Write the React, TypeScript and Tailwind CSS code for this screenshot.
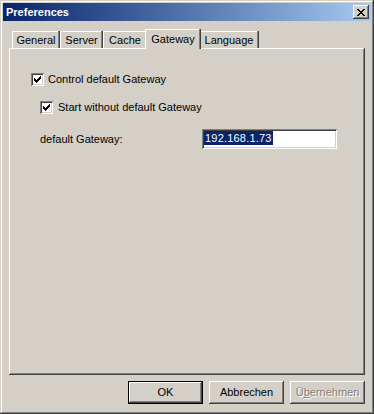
import type { ReactNode } from "react";

// Windows 2000 style "Preferences" dialog, Gateway tab selected.

const FONT = "font-['Liberation_Sans',Arial,sans-serif]";

function CheckMark() {
  // classic 7x7 pixel check: each column is a 3px bar
  const cols = [2, 3, 4, 3, 2, 1, 0];
  return (
    <svg width="7" height="7" viewBox="0 0 7 7" shapeRendering="crispEdges">
      {cols.map((y, x) => (
        <rect key={x} x={x} y={y} width="1" height="3" fill="#000" />
      ))}
    </svg>
  );
}

function Checkbox({ checked }: { checked: boolean }) {
  return (
    <div className="flex h-[13px] w-[13px] shrink-0 items-center justify-center bg-white shadow-[inset_1px_1px_0_#808080,inset_-1px_-1px_0_#ffffff,inset_2px_2px_0_#404040,inset_-2px_-2px_0_#d4d0c8]">
      {checked && <CheckMark />}
    </div>
  );
}

function CloseGlyph() {
  const rows = [
    [0, 1, 6, 7],
    [1, 2, 5, 6],
    [2, 3, 4, 5],
    [3, 4],
    [2, 3, 4, 5],
    [1, 2, 5, 6],
    [0, 1, 6, 7],
  ];
  return (
    <svg width="8" height="7" viewBox="0 0 8 7" shapeRendering="crispEdges">
      {rows.flatMap((xs, y) => xs.map((x) => <rect key={`${x}-${y}`} x={x} y={y} width="1" height="1" fill="#000" />))}
    </svg>
  );
}

function Tab({ label, width, selected }: { label: string; width: number; selected?: boolean }) {
  if (selected) {
    return (
      <div
        className="relative z-10 -mx-[2px] mb-[-1px] h-[20px] bg-[#d4d0c8] pt-[4px] text-center shadow-[inset_-1px_0_0_#404040,inset_-2px_0_0_#808080,inset_1px_1px_0_#ffffff]"
        style={{ width: width + 4 }}
      >
        {label}
      </div>
    );
  }
  return (
    <div
      className="h-[17px] bg-[#d4d0c8] pt-[3px] text-center shadow-[inset_-1px_0_0_#404040,inset_-2px_0_0_#808080,inset_1px_1px_0_#ffffff]"
      style={{ width }}
    >
      {label}
    </div>
  );
}

function Button({ children, isDefault, disabled }: { children: ReactNode; isDefault?: boolean; disabled?: boolean }) {
  const bevel = isDefault
    ? "shadow-[inset_0_0_0_1px_#000000,inset_-2px_-2px_0_#404040,inset_2px_2px_0_#ffffff,inset_-3px_-3px_0_#808080]"
    : "shadow-[inset_-1px_-1px_0_#404040,inset_1px_1px_0_#ffffff,inset_-2px_-2px_0_#808080]";
  return (
    <div
      className={`flex h-[23px] w-[75px] items-center justify-center bg-[#d4d0c8] ${bevel} ${
        disabled ? "text-[#808080] [text-shadow:1px_1px_0_#ffffff]" : "text-black"
      }`}
    >
      {children}
    </div>
  );
}

export default function App() {
  return (
    <div
      className={`h-[414px] w-[374px] bg-[#d4d0c8] p-[3px] text-[11px] leading-[13px] text-black ${FONT} shadow-[inset_-1px_-1px_0_#404040,inset_1px_1px_0_#d4d0c8,inset_-2px_-2px_0_#808080,inset_2px_2px_0_#ffffff]`}
    >
      {/* title bar */}
      <div className="flex h-[18px] items-center justify-between bg-gradient-to-r from-[#0a246a] to-[#a6caf0] pl-[3px] pr-[2px]">
        <span className="text-[11px] font-bold text-white">Preferences</span>
        <div className="flex h-[14px] w-[16px] items-center justify-center bg-[#d4d0c8] shadow-[inset_-1px_-1px_0_#404040,inset_1px_1px_0_#ffffff,inset_-2px_-2px_0_#808080]">
          <CloseGlyph />
        </div>
      </div>

      {/* body */}
      <div className="flex h-[390px] flex-col px-[6px] pt-[8px]">
        <div className="flex h-[19px] items-end pl-[3px]">
          <Tab label="General" width={48} />
          <Tab label="Server" width={43} />
          <Tab label="Cache" width={44} />
          <Tab label="Gateway" width={52} selected />
          <Tab label="Language" width={60} />
        </div>

        <div className="h-[327px] pl-[22px] pt-[25px] shadow-[inset_-1px_-1px_0_#404040,inset_1px_1px_0_#ffffff,inset_-2px_-2px_0_#808080]">
          <div className="flex h-[13px] items-center gap-[4px]">
            <Checkbox checked />
            <span>Control default Gateway</span>
          </div>
          <div className="ml-[9px] mt-[15px] flex h-[13px] items-center gap-[5px]">
            <Checkbox checked />
            <span>Start without default Gateway</span>
          </div>
          <div className="ml-[9px] mt-[15px] flex h-[20px] items-center">
            <span className="w-[162px]">default Gateway:</span>
            <div className="h-[20px] w-[135px] bg-white p-[2px] shadow-[inset_1px_1px_0_#808080,inset_-1px_-1px_0_#ffffff,inset_2px_2px_0_#404040,inset_-2px_-2px_0_#d4d0c8]">
              <span className="inline-block bg-[#0a246a] px-[1px] leading-[14px] tracking-[0.2px] text-white">192.168.1.73</span>
            </div>
          </div>
        </div>

        <div className="mt-[6px] flex justify-end gap-[6px]">
          <Button isDefault>OK</Button>
          <Button>Abbrechen</Button>
          <Button disabled>
            Ü<span className="underline">b</span>ernehmen
          </Button>
        </div>
      </div>
    </div>
  );
}
